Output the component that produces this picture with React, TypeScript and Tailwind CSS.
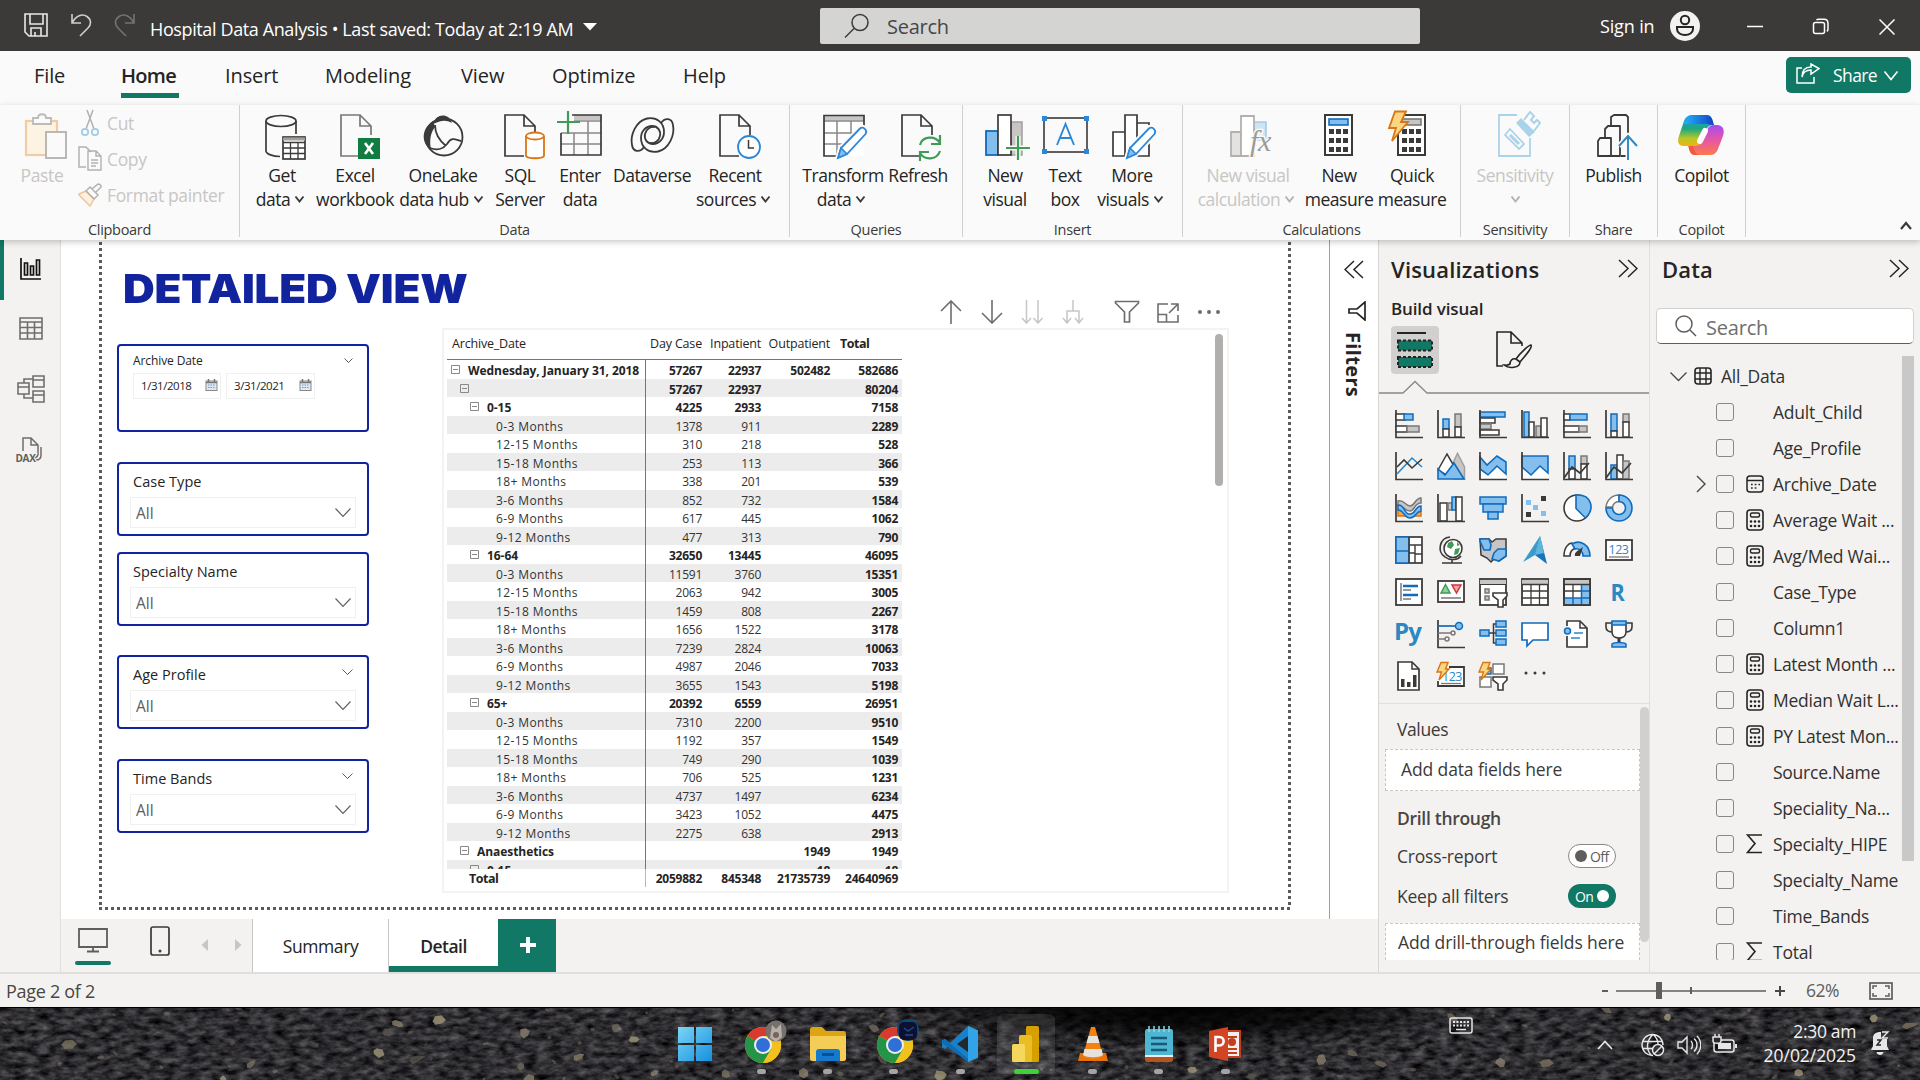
import React from "react";

type Kids = { children?: React.ReactNode };
const DK = "#3b3a39";
const BL = "#0f6cbd";
const LB = "#83beec";
const GR = "#7a7876";
const LG = "#c8c6c4";

function I({ w = 52, h = 52, vb, c = "", children }: Kids & { w?: number; h?: number; vb?: string; c?: string }) {
  return (
    <svg width={w} height={h} viewBox={vb ?? `0 0 ${w} ${h}`} fill="none" className={`block shrink-0 ${c}`}>
      {children}
    </svg>
  );
}

function Chevron({ w, h, c = DK, s = 1.3 }: { w: number; h: number; c?: string; s?: number }) {
  return (
    <svg width={w} height={h} className="block shrink-0 overflow-visible" fill="none">
      <path d={`M0.5 0.5L${w / 2} ${h - 0.5}L${w - 0.5} 0.5`} stroke={c} strokeWidth={s} />
    </svg>
  );
}

/* ---------- Title bar ---------- */
function TitleBar() {
  return (
    <header className="flex h-[51px] shrink-0 items-center bg-[#3b3a39] text-white">
      <div className="flex w-[820px] items-center pl-[24px]">
        <I w={24} h={24} c="-mt-px">
          <path d="M1 1h22v22H5l-4-4z M6 1v10h13V1 M7 23v-8h10v8 M11 23v-4" stroke="#e8e8e8" strokeWidth="1.6" />
        </I>
        <I w={22} h={24} c="ml-[22px] -mt-px">
          <path d="M2 1v9h9 M2 10C6 3 12 0 17 3.500C22 7 21 12 18 15L10 23" stroke="#d0cfce" strokeWidth="1.6" />
        </I>
        <I w={22} h={24} c="ml-[22px] -mt-px">
          <path d="M20 1v9h-9 M20 10C16 3 10 0 5 3.500C0 7 1 12 4 15L12 23" stroke="#75736f" strokeWidth="1.600" />
        </I>
        <span className="mt-[8px] ml-[14px] w-[425px] text-[18px] tracking-[-0.380px] whitespace-pre">Hospital Data Analysis • Last saved: Today at 2:19 AM</span>
        <I w={14} h={8} c="mt-[3px] ml-[8px]">
          <path d="M0 0h14L7 7.500z" fill="#fff" />
        </I>
      </div>
      <div className="flex h-[36px] w-[600px] items-center rounded-[2px] bg-[#d4d4d2] pl-[24px]">
        <I w={26} h={26}>
          <circle cx="16" cy="9.500" r="8" stroke="#3b3a39" strokeWidth="1.500" />
          <path d="M10 15.500L1 24.500" stroke="#3b3a39" strokeWidth="1.500" />
        </I>
        <span className="mt-[3px] ml-[17px] text-[20px] tracking-[-0.250px] text-[#484644]">Search</span>
      </div>
      <div className="flex flex-1 items-center pl-[180px]">
        <span className="w-[55px] pt-px text-[18px] tracking-[-0.150px] whitespace-nowrap">Sign in</span>
        <I w={30} h={30} c="ml-[15px]">
          <circle cx="15" cy="15" r="15" fill="#f3f2f1" />
          <circle cx="15" cy="9" r="4.200" stroke="#252423" strokeWidth="2" />
          <path d="M7 16h16v2c0 8-16 8-16 0z" stroke="#252423" strokeWidth="2" />
        </I>
        <I w={16} h={16} c="ml-[47px]"><path d="M0 8.500h16" stroke="#fff" strokeWidth="1.500" /></I>
        <I w={18} h={18} c="mt-[3px] ml-[49px]">
          <rect x="1.500" y="4.500" width="11" height="11" rx="2" stroke="#fff" strokeWidth="1.500" />
          <path d="M4.500 2C5 1.500 5.500 1.300 6.500 1.300H12C14.500 1.300 16 3 16 5.500V11C16 12 15.500 13 14.800 13.300" stroke="#fff" strokeWidth="1.500" />
        </I>
        <I w={16} h={16} c="mt-[3px] ml-[49px]"><path d="M0.500 0.500l15 15M15.500 0.500l-15 15" stroke="#fff" strokeWidth="1.500" /></I>
      </div>
    </header>
  );
}

/* ---------- Ribbon tabs ---------- */
const TABS: [string, string][] = [
  ["File", "w-[87px]"],
  ["Home", "w-[104px]"],
  ["Insert", "w-[100px]"],
  ["Modeling", "w-[136px]"],
  ["View", "w-[91px]"],
  ["Optimize", "w-[131px]"],
  ["Help", "w-[60px]"],
];
function Tabs() {
  return (
    <nav className="flex h-[54px] shrink-0 bg-[#fafafa] pl-[34px] text-[#252423]">
      {TABS.map(([t, w]) => (
        <div key={t} className={`${w} shrink-0`}>
          <div className="inline-block">
            <div className={`h-[42px] pt-[9px] text-[20px] leading-[32px] ${t === "Home" ? "font-semibold tracking-[-0.700px]" : "tracking-[-0.100px]"}`}>{t}</div>
            {t === "Home" && <div className="h-[5px] w-[58px] bg-[#117865]" />}
          </div>
        </div>
      ))}
      <div className="mt-[6px] mr-[9px] ml-auto flex h-[36px] w-[125px] items-center rounded-[5px] bg-[#117865] pl-[10px] text-white">
        <I w={24} h={22} c="-mt-[2px]">
          <path d="M6 5H1V20H18V14 M6 14C7 9 10 7 15 7V11L23 5.500L15 1V4C9 4 6 8 6 14z" stroke="#fff" strokeWidth="1.500" />
        </I>
        <span className="mr-[7px] ml-[13px] text-[17.500px] tracking-[-0.600px]">Share</span>
        <Chevron w={14} h={9} c="#fff" s={1.600} />
      </div>
    </nav>
  );
}

/* ---------- Ribbon icons ---------- */
const Doc = ({ x = 10, c = DK }: { x?: number; c?: string }) => (
  <path transform={`translate(${x} 4)`} d="M20 42H1V1H20L31 12V21 M20 1V12H31" stroke={c} strokeWidth="1.700" fill="none" />
);
const Pencil = () => (
  <>
    <path d="M20 49L23 38L43 17Q49 16 51 23L30 45z" fill="#fafafa" stroke="#fafafa" strokeWidth="4" />
    <path d="M21 48L24 38L43 18.500C46 16 51 20 48.500 24L30 44z" fill="#fff" stroke="#2b88d8" strokeWidth="1.800" />
    <path d="M21 48L24 38L30 44z" fill={LB} stroke="#2b88d8" strokeWidth="1.500" />
  </>
);
const Calc = ({ grey }: { grey?: boolean }) => (
  <>
    <rect x="12" y="5" width="27" height="40" fill="#fff" stroke={DK} strokeWidth="2" />
    <rect x="16" y="9" width="19" height="6" fill={grey ? LG : LB} stroke={grey ? GR : BL} strokeWidth="1.600" />
    {[19, 28, 37].map((y) => [16, 23, 30].map((x) => <rect key={`${x}-${y}`} x={x} y={y} width="5" height="5" fill={DK} />))}
  </>
);
const Bolt = () => <path d="M9 1.500H20L15 12H22L6 31L10 18H3z" fill="#fcd581" stroke="#d87616" strokeWidth="1.800" />;
const SWIRL = "M18 37C14 43 7 42 6 35C4 25 10 11 21 8.500C31 6.500 38 13 38 22C38 29 33 34 27 34C21 34 18 29 19 24C20 19 25 16 29 17";

const RIB: Record<string, React.ReactNode> = {
  paste: (
    <I>
      <rect x="10" y="11" width="31" height="34" fill="#fdf3e3" stroke="#f0cba4" strokeWidth="2.200" />
      <path d="M17 14V8H22C22 3 30 3 30 8H35V14z" fill="#fafafa" stroke="#bdbbb9" strokeWidth="1.800" />
      <rect x="30" y="22" width="20" height="26" fill="#fafafa" stroke="#b3b1af" strokeWidth="1.800" />
    </I>
  ),
  get: (
    <I>
      <path d="M10 11V41C10 44 17 46.500 24 46.500M40 11V24" stroke={DK} strokeWidth="1.700" />
      <ellipse cx="25" cy="11" rx="15" ry="5.500" stroke={DK} strokeWidth="1.700" />
      <rect x="27" y="27" width="22" height="22" fill="#fff" stroke={DK} strokeWidth="1.700" />
      <path d="M27 29H49" stroke="#a19f9d" strokeWidth="3" />
      <path d="M27 32.500H49M27 38H49M27 43.500H49M34.500 32V49M42 32V49" stroke={DK} strokeWidth="1.300" />
    </I>
  ),
  excel: (
    <I>
      <Doc x={11} c="#797775" />
      <rect x="29" y="28" width="22" height="21" fill="#107c41" />
      <path d="M36 33L44 44M44 33L36 44" stroke="#fff" strokeWidth="2.600" />
    </I>
  ),
  onelake: (
    <I>
      <circle cx="27" cy="27" r="18.500" stroke={DK} strokeWidth="1.800" />
      <path d="M16 14C19 3 32 3 35 13C28 9 23 11 16 14z" fill={DK} />
      <path d="M16 11C2 20 6 36 14 39C12 30 14 22 18 17z" fill={DK} />
      <path d="M18 15C18 25 23 31 29 36M13 38C21 41 27 38 30 34C35 26 39 30 44 31" stroke={DK} strokeWidth="1.800" />
    </I>
  ),
  sql: (
    <I>
      <Doc x={10} />
      <path d="M32 26V46C34 49 48 49 50 46V26" fill="#fff" stroke="#d87616" strokeWidth="1.800" />
      <ellipse cx="41" cy="26" rx="9" ry="3.500" fill="#fff" stroke="#d87616" strokeWidth="1.800" />
    </I>
  ),
  enter: (
    <I>
      <path d="M20 7.500H48" stroke={LG} strokeWidth="5" />
      <path d="M20 11H47M7 23H47M7 34H47M20 23V45M34 11V45" stroke="#8a8886" strokeWidth="1.500" />
      <path d="M18 5H47V45H7V23" stroke={DK} strokeWidth="1.700" />
      <path d="M3 12H26M14 1V24" stroke="#3f9b56" strokeWidth="2.200" />
    </I>
  ),
  dataverse: (
    <I>
      <path d={SWIRL} stroke={DK} strokeWidth="1.800" />
      <path d={SWIRL} transform="rotate(180 26.500 25)" stroke={DK} strokeWidth="1.800" />
    </I>
  ),
  recent: (
    <I>
      <Doc x={10} />
      <circle cx="40" cy="37" r="11" fill="#fff" stroke="#2b88d8" strokeWidth="1.800" />
      <path d="M39.500 30V38H45" stroke={DK} strokeWidth="1.500" />
    </I>
  ),
  transform: (
    <I>
      <rect x="7" y="6" width="40" height="40" fill="#fff" />
      <path d="M7 8H47" stroke={LG} strokeWidth="5" />
      <path d="M7 11H47M7 23H47M7 34H40M20 11V46M34 11V40" stroke="#8a8886" strokeWidth="1.500" />
      <path d="M24 46H7V5.500H47V25" stroke={DK} strokeWidth="1.700" />
      <Pencil />
    </I>
  ),
  refresh: (
    <I>
      <Doc x={9} />
      <circle cx="38" cy="38" r="13" fill="#fafafa" />
      <path d="M28 35C30 26 43 25 48 33M48 25V34H39M48 41C45 50 33 51 28 43M28 51V42H37" stroke="#3f9b56" strokeWidth="2.200" />
    </I>
  ),
  newvisual: (
    <I>
      <rect x="32" y="12" width="11" height="33" fill={LG} stroke="#a19f9d" strokeWidth="1.500" />
      <rect x="7" y="21" width="12" height="24" fill={LB} stroke={BL} strokeWidth="1.800" />
      <rect x="19" y="5" width="13" height="40" fill="#fff" stroke={DK} strokeWidth="1.700" />
      <path d="M27 38H51M39 26V50" stroke="#fafafa" strokeWidth="5" />
      <path d="M27 38H51M39 26V50" stroke="#3f9b56" strokeWidth="2.200" />
    </I>
  ),
  textbox: (
    <I>
      <rect x="5" y="8" width="43" height="34" stroke={DK} strokeWidth="1.600" />
      {[[3, 6], [45, 6], [3, 39], [45, 39]].map(([x, y]) => <rect key={`${x}${y}`} x={x} y={y} width="5" height="5" fill="#2b88d8" />)}
      <path d="M18 35L26.500 14L35 35M21 28H32" stroke="#2b88d8" strokeWidth="1.900" />
    </I>
  ),
  more: (
    <I>
      <path d="M7 22H19V46H7zM19 5H31V46H19zM31 13H43V46H31z" fill="#fff" stroke={DK} strokeWidth="1.700" />
      <Pencil />
    </I>
  ),
  calcvisual: (
    <I>
      <path d="M9 22H19V46H9z" fill="#e3e2e1" stroke="#b3b1af" strokeWidth="1.800" />
      <path d="M32 12H44V30H32z" fill="#cde4f5" stroke="#a5cbe6" strokeWidth="1.600" />
      <path d="M19 6H32V46H19z" fill="#fff" stroke="#b3b1af" strokeWidth="1.800" />
      <text x="28" y="41" className="font-['Liberation_Serif'] text-[30px] italic" fill="#9c9a98" stroke="#fafafa" strokeWidth="3" paintOrder="stroke">fx</text>
    </I>
  ),
  measure: <I><Calc /></I>,
  quick: <I><Calc grey /><Bolt /></I>,
  sensitivity: (
    <I>
      <path d="M28 5H10V46H41V28" stroke="#a9d3ea" strokeWidth="1.800" />
      <path d="M16 25L21 19L35 34L30 39z" stroke="#a9d3ea" strokeWidth="1.800" />
      <path d="M21 25L30 34" stroke="#a9d3ea" strokeWidth="3" />
      <path d="M32 8L46 22L40 27L27 13z" fill="#a9d3ea" />
      <path d="M35 10L41 2L45 6L42 10L45 13L48 10L51 13L45 21" stroke="#a9d3ea" strokeWidth="2" />
    </I>
  ),
  publish: (
    <I>
      <path d="M10 46V31L12 28H23V46zM17 28V19L20 16H32V46H23M23 16V7L26 5H38L40 7V26M33 46H38" stroke={DK} strokeWidth="1.800" strokeLinejoin="round" />
      <path d="M40 50V26M31 36L40 26L49 36" stroke="#fafafa" strokeWidth="5" />
      <path d="M40 50V26M31 36L40 26L49 36" stroke="#2b88c0" strokeWidth="1.900" />
    </I>
  ),
  copilot: (
    <I c="mr-[2px]">
      <defs>
        <linearGradient id="cpA" x1="0" y1="0" x2="0" y2="1">
          <stop offset="0.100" stopColor="#1a9be8" /><stop offset="0.450" stopColor="#1fa87c" /><stop offset="0.750" stopColor="#b8c62a" /><stop offset="1" stopColor="#f0b410" />
        </linearGradient>
        <linearGradient id="cpB" x1="0" y1="0" x2="0" y2="1">
          <stop offset="0" stopColor="#a54ef0" /><stop offset="0.500" stopColor="#e855a5" /><stop offset="1" stopColor="#fb7b4b" />
        </linearGradient>
        <linearGradient id="cpC" x1="0" y1="0" x2="1" y2="0">
          <stop offset="0" stopColor="#22b3f5" /><stop offset="1" stopColor="#1340c8" />
        </linearGradient>
      </defs>
      <path d="M20 45C14 45 14 36 13 34H25L32 20C34 16 36 15 39 15H42C48 15 50 20 48 26L43 39C41 44 38 45 34 45z" fill="url(#cpB)" />
      <path d="M13 34L18 36C20 44 22 45 26 45H20C15 45 14 40 13 34z" fill="#ee5a3c" />
      <path d="M32 5C38 5 38 14 39 15C35 15 33 16 31 20L26 33C25 35 23 36 20 36H9C3 36 2 31 4 26L9 11C11 6 14 5 18 5z" fill="url(#cpA)" />
      <path d="M18 5H32C38 5 38 14 39 15C34 15 32 13 29 14H9C11 7 14 5 18 5z" fill="url(#cpC)" />
      <path d="M30 21L25 31" stroke="#fff" strokeWidth="6" strokeLinecap="round" />
    </I>
  ),
};

type Item = { i: string; w: string; a: string; b?: string; ch?: boolean; dis?: boolean };
const GROUPS: { label: string; w: string; items: Item[] }[] = [
  {
    label: "Data", w: "w-[550px]",
    items: [
      { i: "get", w: "w-[72px] ml-[6px]", a: "Get", b: "data", ch: true },
      { i: "excel", w: "w-[74px]", a: "Excel", b: "workbook" },
      { i: "onelake", w: "w-[102px]", a: "OneLake", b: "data hub", ch: true },
      { i: "sql", w: "w-[52px]", a: "SQL", b: "Server" },
      { i: "enter", w: "w-[68px]", a: "Enter", b: "data" },
      { i: "dataverse", w: "w-[76px]", a: "Dataverse" },
      { i: "recent", w: "w-[90px]", a: "Recent", b: "sources", ch: true },
    ],
  },
  {
    label: "Queries", w: "w-[173px]",
    items: [
      { i: "transform", w: "w-[80px] ml-[13px]", a: "Transform", b: "data", ch: true },
      { i: "refresh", w: "w-[70px]", a: "Refresh" },
    ],
  },
  {
    label: "Insert", w: "w-[220px]",
    items: [
      { i: "newvisual", w: "w-[60px] ml-[12px]", a: "New", b: "visual" },
      { i: "textbox", w: "w-[60px]", a: "Text", b: "box" },
      { i: "more", w: "w-[74px]", a: "More", b: "visuals", ch: true },
    ],
  },
  {
    label: "Calculations", w: "w-[278px]",
    items: [
      { i: "calcvisual", w: "w-[108px] ml-[11px]", a: "New visual", b: "calculation", ch: true, dis: true },
      { i: "measure", w: "w-[74px]", a: "New", b: "measure" },
      { i: "quick", w: "w-[72px]", a: "Quick", b: "measure" },
    ],
  },
  { label: "Sensitivity", w: "w-[109px]", items: [{ i: "sensitivity", w: "w-[108px]", a: "Sensitivity", b: "", ch: true, dis: true }] },
  { label: "Share", w: "w-[88px]", items: [{ i: "publish", w: "w-[87px]", a: "Publish" }] },
  { label: "Copilot", w: "w-[88px]", items: [{ i: "copilot", w: "w-[87px]", a: "Copilot" }] },
];

function RibbonItem({ it }: { it: Item }) {
  return (
    <div className={`${it.w} flex shrink-0 flex-col items-center text-[17.500px] leading-[24px] tracking-[-0.450px] whitespace-nowrap ${it.dis ? "text-[#c8c6c4]" : "text-[#252423]"}`}>
      <div className="h-[58px] pt-[5px]">{RIB[it.i]}</div>
      <div>{it.a}</div>
      {(it.b || it.ch) && (
        <div className={`flex h-[24px] items-center gap-[5px] ${it.b && it.ch ? "mr-[4px]" : ""}`}>
          {it.b && <span>{it.b}</span>}
          {it.ch && <Chevron w={9} h={6} c={it.dis ? "#b3b1af" : DK} s={1.900} />}
        </div>
      )}
    </div>
  );
}

const GroupLabel = ({ children }: Kids) => (
  <div className="shrink-0 pt-[3px] text-center text-[14.500px] leading-[22px] tracking-[-0.300px] text-[#3b3a39]">{children}</div>
);

function Ribbon() {
  return (
    <div className="relative z-10 flex h-[135px] shrink-0 bg-[#fafafa] pb-[3px] shadow-[0_2px_6px_rgba(0,0,0,0.220)]">
      <div className="flex w-[240px] flex-col border-r border-[#d2d0ce] text-[17.500px] tracking-[-0.350px] text-[#c8c6c4]">
        <div className="flex h-[111px] shrink-0">
          <div className="ml-[15px] flex w-[54px] flex-col items-center leading-[24px]">
            <div className="h-[58px] pt-[5px]">{RIB.paste}</div>
            <div>Paste</div>
          </div>
          <div className="ml-[9px] flex flex-col">
            <div className="flex h-[36px] shrink-0 items-center">
              <I w={24} h={28} c="mr-[5px]">
                <path d="M9 1L16 20M15 1L8 20" stroke="#b3b1af" strokeWidth="1.500" />
                <circle cx="7" cy="23" r="3.200" stroke="#9fcbe6" strokeWidth="1.700" /><circle cx="17" cy="23" r="3.200" stroke="#9fcbe6" strokeWidth="1.700" />
              </I>Cut
            </div>
            <div className="flex h-[36px] shrink-0 items-center">
              <I w={24} h={26} c="mr-[5px]">
                <path d="M8 21H1V1H8L13 6" stroke="#b3b1af" strokeWidth="1.500" />
                <path d="M10 5H18L23 10V24H10zM18 5V10H23M13 14H20M13 17H20M13 20H18" stroke="#b3b1af" strokeWidth="1.400" />
              </I>Copy
            </div>
            <div className="flex h-[36px] shrink-0 items-center whitespace-nowrap">
              <I w={24} h={24} c="mr-[5px]">
                <path d="M1 11L8 8L16 16L12 23L1 12z" fill="#fdf0dc" stroke="#f0c49a" strokeWidth="1.500" />
                <path d="M8 8L12 4L20 12L16 16zM14 6L20 1C23 1 24 4 22 5L17 10" stroke="#b3b1af" strokeWidth="1.500" />
              </I>Format painter
            </div>
          </div>
        </div>
        <GroupLabel>Clipboard</GroupLabel>
      </div>
      {GROUPS.map((g) => (
        <div key={g.label} className={`${g.w} flex shrink-0 flex-col border-r border-[#d2d0ce]`}>
          <div className="flex h-[111px] shrink-0">{g.items.map((it) => <RibbonItem key={it.i} it={it} />)}</div>
          <GroupLabel>{g.label}</GroupLabel>
        </div>
      ))}
      <div className="mr-[8px] mb-[7px] ml-auto flex items-end">
        <I w={12} h={9}><path d="M1 8L6 2L11 8" stroke={DK} strokeWidth="2.200" /></I>
      </div>
    </div>
  );
}

/* ---------- Left rail ---------- */
function Rail() {
  return (
    <aside className="flex w-[61px] shrink-0 flex-col border-r border-[#e1dfdd] bg-[#f3f2f1]">
      <div className="flex h-[60px] items-center border-l-4 border-[#117865] pl-[16px]">
        <I w={22} h={22} c="-mt-[2px]"><path d="M1 0V21H21M4.500 5H7.500V17H4.500zM10.500 8H13.500V17H10.500zM16.500 2H19.500V17H16.500z" stroke="#111" strokeWidth="1.700" /></I>
      </div>
      <div className="flex h-[57px] items-center pl-[19px]">
        <I w={24} h={23}><path d="M1 1H23V22H1zM1 5H23M1 10.500H23M1 16H23M8.500 5V22M15.500 5V22" stroke="#706e6c" strokeWidth="1.600" /></I>
      </div>
      <div className="flex h-[64px] items-center pl-[17px]">
        <I w={28} h={28}><path d="M1 8H12V19H1zM1 12H12M16 1H27V12H16zM16 5H27M16 16H27V27H16zM16 20H27M7 8V4H16M7 19V23H16" stroke="#706e6c" strokeWidth="1.600" /></I>
      </div>
      <div className="flex h-[58px] items-center pl-[16px]">
        <I w={27} h={26} c="overflow-visible">
          <path d="M7 14V1H15L22 8V17C22 19 21 20 19 21M15 1V8H22M25 10V18C25 21 23 23 20 23" stroke="#706e6c" strokeWidth="1.500" />
          <text x="-0.500" y="24.500" className="text-[10px] font-bold tracking-[-0.300px]" fill="#605e5c" stroke="#f3f2f1" strokeWidth="2" paintOrder="stroke">DAX</text>
        </I>
      </div>
    </aside>
  );
}

/* ---------- Canvas ---------- */
function Slicer({ title, top, arrow }: { title: string; top: string; arrow?: boolean }) {
  return (
    <div className={`${top} h-[74px] rounded-[4px] border-2 border-[#12239e] bg-white px-[11px]`}>
      <div className="flex h-[33px] items-center justify-between pt-[3px] pr-[3px] pl-[3px]">
        <span className="text-[14.500px] tracking-[0.020px] text-[#252423]">{title}</span>
        {arrow && <span className="-mt-[6px]"><Chevron w={11} h={6} c="#605e5c" s={1} /></span>}
      </div>
      <div className="flex h-[31px] items-center justify-between border border-[#f0f0f0] pr-[4px] pl-[5px]">
        <span className="pt-[2px] text-[15.500px] font-medium text-[#605e5c]">All</span>
        <Chevron w={16} h={9} c="#605e5c" s={1.100} />
      </div>
    </div>
  );
}

function DateBox({ v, w }: { v: string; w: string }) {
  return (
    <div className={`${w} flex h-[26px] items-center justify-between border border-[#f0f0f0] pr-[2px] pl-[7px]`}>
      <span className="text-[11.500px] tracking-[-0.450px] text-[#252423]">{v}</span>
      <I w={13} h={12} c="-mt-[3px]">
        <rect x="1" y="2" width="11" height="9.500" fill="#dce9f5" stroke="#8a8886" />
        <path d="M1 3.500H12M3.500 0V3M9.500 0V3" stroke="#797775" strokeWidth="1.500" />
        <path d="M3 6H10M3 8.500H10" stroke="#7896b8" strokeDasharray="1.500 1" />
      </I>
    </div>
  );
}

type Row = [number, string, string, string, string, string];
const ROWS: Row[] = [
  [0, "Wednesday, January 31, 2018", "57267", "22937", "502482", "582686"],
  [1, "", "57267", "22937", "", "80204"],
  [2, "0-15", "4225", "2933", "", "7158"],
  [3, "0-3 Months", "1378", "911", "", "2289"],
  [3, "12-15 Months", "310", "218", "", "528"],
  [3, "15-18 Months", "253", "113", "", "366"],
  [3, "18+ Months", "338", "201", "", "539"],
  [3, "3-6 Months", "852", "732", "", "1584"],
  [3, "6-9 Months", "617", "445", "", "1062"],
  [3, "9-12 Months", "477", "313", "", "790"],
  [2, "16-64", "32650", "13445", "", "46095"],
  [3, "0-3 Months", "11591", "3760", "", "15351"],
  [3, "12-15 Months", "2063", "942", "", "3005"],
  [3, "15-18 Months", "1459", "808", "", "2267"],
  [3, "18+ Months", "1656", "1522", "", "3178"],
  [3, "3-6 Months", "7239", "2824", "", "10063"],
  [3, "6-9 Months", "4987", "2046", "", "7033"],
  [3, "9-12 Months", "3655", "1543", "", "5198"],
  [2, "65+", "20392", "6559", "", "26951"],
  [3, "0-3 Months", "7310", "2200", "", "9510"],
  [3, "12-15 Months", "1192", "357", "", "1549"],
  [3, "15-18 Months", "749", "290", "", "1039"],
  [3, "18+ Months", "706", "525", "", "1231"],
  [3, "3-6 Months", "4737", "1497", "", "6234"],
  [3, "6-9 Months", "3423", "1052", "", "4475"],
  [3, "9-12 Months", "2275", "638", "", "2913"],
  [1, "Anaesthetics", "", "", "1949", "1949"],
  [2, "0-15", "", "", "18", "18"],
];
const INDENT = ["pl-[4px]", "pl-[13px]", "pl-[23px]", "pl-[49px]"];

function Matrix() {
  return (
    <div className="flex h-[565px] w-[787px] justify-between border-2 border-[#f3f3f3] bg-white text-[12px] tracking-[-0.250px] text-[#333]">
      <div className="ml-[3px] flex w-[455px] flex-col">
        <div className="flex h-[30px] items-center border-b border-[#118dff] text-[12.500px] tracking-[-0.180px] text-[#252423]">
          <div className="w-[199px] pl-[5px]">Archive_Date</div>
          <div className="w-[56px] text-right">Day Case</div>
          <div className="w-[59px] text-right">Inpatient</div>
          <div className="w-[69px] text-right">Outpatient</div>
          <div className="pl-[10px] font-bold tracking-[-0.500px]">Total</div>
        </div>
        <div className="h-[509px] overflow-hidden">
          {ROWS.map(([lv, name, a, b, c, d], n) => (
            <div key={n} className={`flex h-[18.530px] leading-[22px] ${n % 2 ? "bg-[#ececec]" : "bg-white"} ${lv < 3 ? "font-bold text-[#252423]" : ""}`}>
              <div className={`${INDENT[lv]} flex h-full w-[199px] border-r border-[#118dff] whitespace-nowrap ${lv < 3 ? "tracking-[-0.060px]" : "tracking-[0.400px]"}`}>
                {lv < 3 && (
                  <I w={9} h={9} c="mt-[5px] mr-[8px]"><path d="M0.500 0.500H8.500V8.500H0.500zM2 4.500H7" stroke="#8a8886" /></I>
                )}
                {name}
              </div>
              <div className="w-[56px] text-right">{a}</div>
              <div className="w-[59px] text-right">{b}</div>
              <div className="w-[69px] text-right">{c}</div>
              <div className="w-[68px] text-right font-bold text-[#252423]">{d}</div>
            </div>
          ))}
        </div>
        <div className="flex h-[18px] items-center leading-[20px] font-bold text-[#252423]">
          <div className="flex h-full w-[199px] items-center border-r border-[#8cc4f7] pt-px pl-[22px] text-[12.500px] tracking-[-0.500px]">Total</div>
          <div className="w-[56px] pt-[2px] text-right">2059882</div>
          <div className="w-[59px] pt-[2px] text-right">845348</div>
          <div className="w-[69px] pt-[2px] text-right">21735739</div>
          <div className="w-[68px] pt-[2px] text-right">24640969</div>
        </div>
      </div>
      <div className="mt-[4px] mr-[4px] h-[152px] w-[8px] rounded-full bg-[#b1afae]" />
    </div>
  );
}

function VisualToolbar() {
  const c = "#706e6c";
  const l = "#c8c6c4";
  return (
    <div className="flex h-[24px] items-center">
      <I w={22} h={24}><path d="M11 24V1M1 11L11 1L21 11" stroke={c} strokeWidth="1.600" /></I>
      <I w={22} h={24} c="ml-[19px]"><path d="M11 0V23M1 13L11 23L21 13" stroke={c} strokeWidth="1.600" /></I>
      <I w={22} h={24} c="ml-[18px]"><path d="M5.500 0V22M1 18L5.500 23L10 18M17 0V22M12.500 18L17 23L21.500 18" stroke={l} strokeWidth="1.500" /></I>
      <I w={22} h={24} c="ml-[19px]"><path d="M11 0V11M5 22V11H17V22M1 18L5 23L9 18M13 18L17 23L21 18" stroke={l} strokeWidth="1.500" /></I>
      <I w={26} h={24} c="ml-[30px]"><path d="M1.500 1.500H24.500V3L15.500 12V22H10.500V12L1.500 3z" stroke={c} strokeWidth="1.700" /></I>
      <I w={22} h={20} c="mt-[2px] ml-[17px]"><path d="M11 1H1V19H21V12M1 11.500H9.500V19M12 10L21 1M14 1H21V8" stroke={c} strokeWidth="1.600" /></I>
      <I w={24} h={6} c="ml-[18px]"><circle cx="3" cy="3" r="2" fill={c} /><circle cx="12" cy="3" r="2" fill={c} /><circle cx="21" cy="3" r="2" fill={c} /></I>
    </div>
  );
}

const VDOT = "w-[3px] shrink-0 bg-[repeating-linear-gradient(to_bottom,transparent_0_2px,#5c5a58_2px_5px,transparent_5px_6px)]";

function Canvas() {
  return (
    <main className="flex h-[679px] bg-white pl-[38px]">
      <div className="flex h-[670px] w-[1192px] flex-col">
        <div className="flex h-[667px]">
          <div className={VDOT} />
          <div className="w-[1186px]">
            <div className="h-[60px] pt-[26px] pl-[21px]">
              <h1 className="w-[345px] origin-left scale-x-[1.100] font-[Inter] text-[40px] leading-[46px] font-black tracking-[-0.200px] whitespace-nowrap text-[#12239e]">DETAILED VIEW</h1>
            </div>
            <div className="pl-[838px]"><VisualToolbar /></div>
            <div className="flex">
              <div className="flex w-[267px] flex-col pt-[20px] pl-[15px]">
                <div className="h-[88px] rounded-[4px] border-2 border-[#12239e] bg-white px-[14px]">
                  <div className="flex h-[27px] items-center justify-between pt-[2px]">
                    <span className="text-[12px] tracking-[-0.100px] text-[#252423]">Archive Date</span>
                    <Chevron w={9} h={5} c="#605e5c" s={1} />
                  </div>
                  <div className="flex gap-[5px]"><DateBox v="1/31/2018" w="w-[88px]" /><DateBox v="3/31/2021" w="w-[89px]" /></div>
                </div>
                <Slicer title="Case Type" top="mt-[30px]" />
                <Slicer title="Specialty Name" top="mt-[16px]" />
                <Slicer title="Age Profile" top="mt-[29px]" arrow />
                <Slicer title="Time Bands" top="mt-[30px]" arrow />
              </div>
              <div className="pt-[4px] pl-[73px]"><Matrix /></div>
            </div>
          </div>
          <div className={VDOT} />
        </div>
        <div className="h-[3px] bg-[repeating-linear-gradient(to_right,#5c5a58_0_3px,transparent_3px_6px)]" />
      </div>
      <div className="ml-auto flex w-[49px] flex-col items-center border-l border-[#a19f9d] pt-[20px]">
        <I w={20} h={19}><path d="M10 1L1 9.500L10 18M19 1L10 9.500L19 18" stroke="#252423" strokeWidth="1.500" /></I>
        <I w={18} h={20} c="mt-[22px] ml-[6px]"><path d="M17 1V19L9 12H1V8H9z" stroke="#252423" strokeWidth="1.700" /></I>
        <div className="mt-[11px] mr-[2px] text-[20px] leading-[24px] font-bold tracking-[0.350px] text-[#252423] [writing-mode:vertical-rl]">Filters</div>
      </div>
    </main>
  );
}

function PageTabs() {
  return (
    <div className="flex h-[53px] bg-[#f3f2f1]">
      <div className="flex w-[192px] border-r border-[#c8c6c4]">
        <div className="ml-[14px] w-[36px]">
          <I w={36} h={42}><path d="M4 10H32V28H4zM18 28V32M12 32.500H24" stroke="#605e5c" strokeWidth="1.800" /></I>
          <div className="h-[4px] rounded-full bg-[#117865]" />
        </div>
        <I w={20} h={30} c="mt-[7px] ml-[39px]"><rect x="1" y="1" width="18" height="28" rx="2" stroke="#3b3a39" strokeWidth="1.700" /><circle cx="10" cy="25" r="1.500" fill="#3b3a39" /></I>
        <I w={8} h={12} c="mt-[20px] ml-[31px]"><path d="M7 0V12L0.500 6z" fill="#c8c6c4" /></I>
        <I w={8} h={12} c="mt-[20px] ml-[25px]"><path d="M1 0V12L7.500 6z" fill="#c8c6c4" /></I>
      </div>
      <div className="w-[136px] border-r border-[#c8c6c4] bg-white text-center text-[17.500px] leading-[54px] tracking-[-0.400px] text-[#252423]">Summary</div>
      <div className="w-[109px] border-b-[6px] border-[#117865] bg-white text-center text-[17.500px] leading-[54px] font-semibold tracking-[-0.500px] text-[#252423]">Detail</div>
      <div className="flex w-[58px] items-center justify-center bg-[#117865]">
        <I w={18} h={18} c="-mt-[2px] ml-px"><path d="M9 1V17M1 9H17" stroke="#fff" strokeWidth="4" /></I>
      </div>
    </div>
  );
}

/* ---------- Visualizations pane ---------- */
const Ax = () => <path d="M1 0V27.500H28" stroke={DK} strokeWidth="1.700" />;
const R = ({ x, y, w, h, f = "#fff", s = DK, sw = 1.500 }: { x: number; y: number; w: number; h: number; f?: string; s?: string; sw?: number }) => (
  <rect x={x} y={y} width={w} height={h} fill={f} stroke={s} strokeWidth={sw} />
);
const T123 = ({ x, y }: { x: number; y: number }) => <text x={x} y={y} className="text-[12.500px] tracking-[-0.500px]" fill="#2b88c8">123</text>;
const SmallBolt = () => <path d="M4 0.500H11L8.500 7H12L2 18L4.500 10H0z" fill="#fcd581" stroke="#d87616" strokeWidth="1.400" />;

const VIZ: React.ReactNode[] = [
  <><Ax /><R x={1} y={4} w={9} h={6} /><R x={9} y={4} w={9} h={6} f={LB} s={BL} /><R x={1} y={16} w={11} h={6} /><R x={12} y={16} w={12} h={6} f={LG} s={GR} /></>,
  <><Ax /><R x={6} y={9} w={6} h={10} f={LB} s={BL} /><R x={6} y={19} w={6} h={8} /><R x={18} y={4} w={6} h={13} f={LG} s={GR} /><R x={18} y={17} w={6} h={10} /></>,
  <><R x={1} y={2} w={25} h={5} f={LB} s={BL} /><R x={1} y={8} w={15} h={5} /><R x={1} y={14} w={11} h={5} f={LG} s={GR} /><R x={1} y={20} w={19} h={5} /><Ax /></>,
  <><R x={3} y={2} w={5} h={25} f={LB} s={BL} /><R x={8} y={12} w={5} h={15} /><R x={15} y={16} w={5} h={11} f={LG} s={GR} /><R x={20} y={8} w={6} h={19} /><Ax /></>,
  <><Ax /><R x={1} y={4} w={6} h={6} /><R x={7} y={4} w={17} h={6} f={LB} s={BL} /><R x={1} y={16} w={15} h={6} /><R x={16} y={16} w={8} h={6} f={LG} s={GR} /></>,
  <><Ax /><R x={6} y={4} w={6} h={17} f={LB} s={BL} /><R x={6} y={21} w={6} h={6} /><R x={18} y={4} w={6} h={8} f={LG} s={GR} /><R x={18} y={12} w={6} h={15} /></>,
  <><Ax /><path d="M2 22L17 6L27 15" stroke="#2b88c8" strokeWidth="1.600" /><path d="M2 15L9 8L17 16L27 7" stroke={DK} strokeWidth="1.600" /></>,
  <><path d="M13 17L20.500 1.500L27.500 15V27H17z" fill={LG} stroke="#a19f9d" strokeWidth="1.500" /><path d="M1 18L10 2L17 14L11 24z" fill="#fff" stroke={DK} strokeWidth="1.500" /><path d="M1 17L8 23L17 11L27 27H1z" fill={LB} stroke={BL} strokeWidth="1.600" /></>,
  <><path d="M1 5L8 13L18 4L27 10V22L18 14L9 23L1 17z" fill={LB} stroke={BL} strokeWidth="1.600" /><path d="M2 19L9 24L18 16L27 24V27H2z" fill="#fff" /><Ax /></>,
  <><R x={1} y={4} w={26} h={23} f="#fff" s="#fff" /><path d="M1 4H27V21L19 14L10 23L1 15z" fill={LB} stroke={BL} strokeWidth="1.600" /><Ax /></>,
  <><R x={6} y={4} w={6} h={13} f={LB} s={BL} /><R x={6} y={17} w={6} h={10} /><R x={18} y={4} w={6} h={8} f={LG} s={GR} /><R x={18} y={12} w={6} h={15} /><Ax /><path d="M1 26L9 15L17 21L26 11" stroke={DK} strokeWidth="1.700" /></>,
  <><R x={6} y={13} w={6} h={14} f={LB} s={BL} /><R x={12} y={3} w={6} h={24} /><R x={18} y={9} w={6} h={18} f={LG} s={GR} /><Ax /><path d="M1 26L9 15L17 21L26 11" stroke={DK} strokeWidth="1.700" /></>,
  <><path d="M3 15C9 12 10 22 15 22C20 22 20 18 26 18V22H3z" fill="#f6a64c" stroke="#d87616" strokeWidth="1.500" /><path d="M3 7C9 5 10 12 15 12C20 12 20 4 26 4V9C19 9 20 17 15 17C9 17 9 11 3 12z" fill={LG} stroke={GR} strokeWidth="1.500" /><path d="M3 11C10 10 9 21 15 20C21 20 20 12 26 12V17C21 17 21 24 15 24C9 24 9 16 3 16z" fill={LB} stroke={BL} strokeWidth="1.500" /><Ax /></>,
  <><R x={3} y={9} w={7} h={18} /><R x={11} y={9} w={4} h={7} f={LG} s={GR} /><R x={15} y={3} w={4} h={13} f={LB} s={BL} /><R x={19} y={3} w={6} h={24} /><Ax /></>,
  <><R x={1} y={3} w={26} h={7} f={LB} s={BL} /><R x={4} y={10} w={20} h={8} f={LB} s={BL} /><R x={9} y={18} w={10} h={7} f={LB} s={BL} /></>,
  <><Ax /><rect x="5" y="6" width="5" height="5" fill={LB} /><rect x="12" y="11" width="5" height="5" fill={LB} /><rect x="20" y="17" width="5" height="5" fill={LB} /><rect x="20" y="2" width="5" height="5" fill={DK} /><rect x="5" y="18" width="5" height="5" fill={DK} /></>,
  <><circle cx="14" cy="14" r="13" fill="#fff" stroke={DK} strokeWidth="1.600" /><path d="M13 1C29 0 32 15 22.500 24L13 14.500z" fill={LB} stroke={BL} strokeWidth="1.600" /></>,
  <><circle cx="14" cy="14" r="10" stroke="#fff" strokeWidth="6" /><path d="M1 13A13 13 0 0 1 14 1V7.500A7 7 0 0 0 7.500 13z" stroke={GR} strokeWidth="1.500" /><path d="M14 1A13 13 0 1 1 1 14H7.500A6.500 6.500 0 1 0 14 7.500z" fill={LB} stroke={BL} strokeWidth="1.600" /></>,
  <><R x={1} y={1} w={26} h={26} sw={1.700} /><path d="M14 1H1V27H14zM1 15H14" fill={LB} stroke={BL} strokeWidth="1.600" /><path d="M14 1V27M14 9H27M20 9V27M14 17H20M20 18H27" stroke={DK} strokeWidth="1.400" /></>,
  <><circle cx="16" cy="12.500" r="9" fill="#fff" stroke={DK} strokeWidth="1.600" /><path d="M11 7L15 5L17 9L14 13L10 11zM18 13L23 12L21 18L17 19zM20 6L23 9L20 10z" fill="#3f9b56" /><path d="M13 1C2 2 0 16 8 21C13 25 21 24 24 20M15 23V26.500M5 27H25" stroke={DK} strokeWidth="1.600" /></>,
  <><path d="M1 3H10L13 6L17 3H27V20L20 25L15 23L12 26L8 22L2 19z" fill={LG} stroke={DK} strokeWidth="1.500" /><path d="M1 3H10L12 9L11 14H5L1 5z" fill={LB} stroke={BL} strokeWidth="1.600" /><path d="M15 17L19 13H27V20L20 25L13 23z" fill={LB} stroke={BL} strokeWidth="1.600" /></>,
  <><path d="M19 0L2 26L14 19z" fill="#3a9bcb" /><path d="M19 0L14 19L26 28z" fill="#1a73b8" /><path d="M19 0L23 17L14 19z" fill="#5cb6dc" /></>,
  <><path d="M1 20C1 11 6 7 9 7L13 12C9 13 7 16 7 20z" fill="#fff" stroke={DK} strokeWidth="1.600" /><path d="M9 8C17 3 27 9 27 20H20C20 15 16 12 12 13z" fill={LB} stroke={BL} strokeWidth="1.600" /><path d="M12 20C11 16 15 15 20 11L17 20z" fill={DK} /></>,
  <><R x={1} y={4} w={26} h={20} sw={1.800} /><T123 x={3.500} y={18} /><path d="M4 21H24" stroke={GR} strokeWidth="1.300" /></>,
  <><R x={1} y={1} w={26} h={26} sw={1.800} /><path d="M6 5V23" stroke={GR} strokeWidth="1.500" /><path d="M8 8H23M8 17H23" stroke={BL} strokeWidth="2.500" /><path d="M8 12H16M8 21H16" stroke={GR} strokeWidth="1.300" /></>,
  <><R x={1} y={3} w={26} h={21} sw={1.800} /><path d="M4 15L8.500 6.500L13 15z" fill="#8fce9e" stroke="#3f9b56" strokeWidth="1.500" /><path d="M15 7H24L19.500 15z" fill="#f4a3a8" stroke="#d13438" strokeWidth="1.500" /><path d="M4 20H24" stroke={GR} strokeWidth="1.500" /></>,
  <><R x={1} y={1} w={26} h={26} sw={1.800} /><path d="M1 4H27" stroke={LG} strokeWidth="4" /><path d="M1 6.500H27" stroke={DK} /><R x={6} y={11} w={4} h={4} f={LG} s={GR} /><R x={6} y={18} w={4} h={4} f={LG} s={GR} /><path d="M14 15H28V18L24 22V29H19V22L14 18z" fill="#fff" stroke={DK} strokeWidth="1.600" /></>,
  <><R x={1} y={1} w={26} h={26} sw={1.800} /><path d="M1 4H27" stroke={LG} strokeWidth="4" /><path d="M1 6.500H27M1 13H27M1 20H27M10 6V27M18.500 6V27" stroke={DK} strokeWidth="1.300" /></>,
  <><R x={1} y={1} w={26} h={26} sw={1.800} /><path d="M1 4H27" stroke={LG} strokeWidth="4" /><path d="M18.500 7H27V27H1V20H18.500z" fill={LB} /><path d="M1 6.500H27M1 13H18M10 6V20" stroke={DK} strokeWidth="1.300" /><path d="M18.500 7V27M1 20H27M18.500 13H27M10 20V27" stroke={BL} strokeWidth="1.500" /><R x={1} y={1} w={26} h={26} f="none" sw={1.800} /></>,
  <text x="5" y="23" className="text-[24px] font-bold" fill="#2b88c0" transform="translate(1 0) scale(0.900 1)">R</text>,
  <text x="-1" y="20" className="text-[24px] font-bold tracking-[-0.800px]" fill="#2b88c0">Py</text>,
  <><Ax /><path d="M1 6H19" stroke={BL} strokeWidth="1.700" /><circle cx="22" cy="6" r="3.500" fill={LB} stroke={BL} strokeWidth="1.500" /><path d="M1 13H14M1 19H8" stroke={GR} strokeWidth="1.500" /><circle cx="16" cy="13" r="2" stroke={GR} strokeWidth="1.500" /><circle cx="10" cy="19" r="2" stroke={GR} strokeWidth="1.500" /></>,
  <><path d="M10 13H17M23 4H14.500V23H18" stroke={DK} strokeWidth="1.500" /><R x={1} y={10} w={9} h={6} f={LB} s={BL} /><R x={17} y={1} w={10} h={6} f={LB} s={BL} /><R x={17} y={10} w={10} h={6} f={LB} s={BL} /><R x={17} y={19} w={10} h={6} f={LB} s={BL} /></>,
  <path d="M1 3H27V20H12L6 26V20H1z" fill="#fff" stroke={BL} strokeWidth="1.700" />,
  <><path d="M4 6V1H17L24 8V27H4V16" fill="#fff" stroke={DK} strokeWidth="1.700" /><path d="M17 1V8H24" stroke={DK} strokeWidth="1.500" /><circle cx="4.500" cy="11" r="3" fill={LB} stroke={BL} strokeWidth="1.500" /><path d="M11 13H20M8 18H17" stroke="#2b88c8" strokeWidth="1.500" /></>,
  <><path d="M6 3H1V7C1 11 4 12 8 12M22 3H27V7C27 11 24 12 20 12" stroke={DK} strokeWidth="1.600" /><path d="M7 2H21V12C21 20 7 20 7 12z" fill="#fff" stroke={DK} strokeWidth="1.600" /><path d="M7 1H21V5H7zM7 27V24C9 22 19 22 21 24V27z" fill={LB} stroke={BL} strokeWidth="1.500" /><path d="M14 18V22" stroke={DK} strokeWidth="3" /></>,
  <><path d="M3 0H17L24 7V28H3z" fill="#fff" stroke={DK} strokeWidth="1.700" /><path d="M17 0V7H24" stroke={DK} strokeWidth="1.500" /><rect x="6" y="17" width="3.500" height="8" fill={DK} /><rect x="12" y="20" width="3.500" height="5" fill={DK} /><rect x="18" y="13" width="3.500" height="12" fill={DK} /></>,
  <><path d="M12 5H27V24H1V19" fill="#fff" stroke={DK} strokeWidth="1.800" /><T123 x={5} y={19} /><path d="M4 21.500H24" stroke={GR} strokeWidth="1.300" /><SmallBolt /></>,
  <><R x={14} y={2} w={11} h={10} s={GR} /><R x={1} y={15} w={11} h={10} s={GR} /><R x={8} y={6} w={4} h={6} f={LB} s={BL} /><path d="M14 15H28V18L24 22V28H19V22L14 18z" fill="#fff" stroke={DK} strokeWidth="1.600" /><SmallBolt /></>,
  <><circle cx="5" cy="11" r="1.500" fill={DK} /><circle cx="14" cy="11" r="1.500" fill={DK} /><circle cx="23" cy="11" r="1.500" fill={DK} /></>,
];

const Expand = () => (
  <I w={20} h={19}><path d="M1 1L10 9.500L1 18M10 1L19 9.500L10 18" stroke="#252423" strokeWidth="1.500" /></I>
);

function VizPane() {
  return (
    <section className="flex w-[271px] shrink-0 flex-col border-l border-[#d8d6d4] bg-[#f3f2f1] text-[#252423]">
      <div className="flex h-[57px] items-center justify-between pr-[11px] pl-[12px]">
        <h2 className="pt-[2px] text-[22px] font-semibold tracking-[0.180px]">Visualizations</h2>
        <Expand />
      </div>
      <div className="h-[29px] pl-[12px] text-[17px] leading-[24px] font-semibold tracking-[-0.130px]">Build visual</div>
      <div className="flex h-[48px] pl-[12px]">
        <div className="flex size-[48px] items-center justify-center rounded-[4px] bg-[#d2d0ce]">
          <I w={36} h={36}>
            <path d="M0 1H29" stroke="#252423" strokeWidth="2" />
            <path d="M1 8.500H35V18.500H1zM1 25H35V35H1z" fill="#117865" stroke="#252423" strokeWidth="2" strokeDasharray="3 2" />
          </I>
        </div>
        <I w={40} h={40} c="mt-[4px] ml-[56px]">
          <path d="M8 36H2V2H16L27 13V16M16 2V13H27" stroke="#252423" strokeWidth="1.600" />
          <path d="M21 29C26 22 34 15 36 15C38 17 31 25 25 32M21 29C17 28 15 31 15 34C12 36 10 35 9 35C14 39 25 38 25 32z" stroke="#252423" strokeWidth="1.600" />
        </I>
      </div>
      <I w={270} h={20}><path d="M0 19H24L36 7.500L48 19H270" stroke="#8a8886" strokeWidth="1.300" /></I>
      <div className="grid h-[310px] shrink-0 grid-cols-[repeat(6,42px)] content-start gap-y-[12px] border-b border-[#e1dfdd] pt-[16px] pl-[16px]">
        {VIZ.map((v, i) => (
          <svg key={i} width="30" height="30" className="block overflow-visible" fill="none">{v}</svg>
        ))}
      </div>
      <div className="flex h-[256px] justify-between overflow-hidden text-[17.500px] tracking-[-0.120px] text-[#3b3a39]">
        <div className="w-[261px] pl-[6px]">
          <div className="h-[45px] pl-[12px] leading-[50px] tracking-[-0.400px]">Values</div>
          <div className="h-[42px] border border-dashed border-[#c8c6c4] bg-white pl-[15px] leading-[38px]">Add data fields here</div>
          <div className="h-[47px] pl-[12px] leading-[55px] font-semibold tracking-[-0.300px] text-[#484644]">Drill through</div>
          <div className="flex h-[36px] items-center justify-between pr-[24px] pl-[12px] tracking-[-0.200px]">
            Cross-report
            <div className="flex h-[24px] w-[48px] items-center gap-[3px] rounded-full border border-[#8a8886] bg-white pl-[6px] text-[14px] tracking-[-0.600px] text-[#605e5c]">
              <span className="size-[12px] rounded-full bg-[#605e5c]" />Off
            </div>
          </div>
          <div className="flex h-[44px] items-center justify-between pr-[24px] pl-[12px] tracking-[-0.220px]">
            Keep all filters
            <div className="flex h-[24px] w-[48px] items-center gap-[4px] rounded-full bg-[#117865] pl-[7px] text-[14px] tracking-[-0.600px] text-white">
              On<span className="size-[12px] rounded-full bg-white" />
            </div>
          </div>
          <div className="mt-[5px] h-[37px] overflow-hidden">
            <div className="h-[42px] border border-dashed border-[#c8c6c4] bg-white pl-[12px] leading-[37px] whitespace-nowrap">Add drill-through fields here</div>
          </div>
        </div>
        <div className="mt-[3px] h-[235px] w-[9px] rounded-full bg-[#d2d0ce]" />
      </div>
    </section>
  );
}

/* ---------- Data pane ---------- */
type Field = { n: string; k?: "calc" | "sum" | "date" };
const FIELDS: Field[] = [
  { n: "Adult_Child" },
  { n: "Age_Profile" },
  { n: "Archive_Date", k: "date" },
  { n: "Average Wait ...", k: "calc" },
  { n: "Avg/Med Wai...", k: "calc" },
  { n: "Case_Type" },
  { n: "Column1" },
  { n: "Latest Month ...", k: "calc" },
  { n: "Median Wait L...", k: "calc" },
  { n: "PY Latest Mon...", k: "calc" },
  { n: "Source.Name" },
  { n: "Speciality_Na..." },
  { n: "Specialty_HIPE", k: "sum" },
  { n: "Specialty_Name" },
  { n: "Time_Bands" },
  { n: "Total", k: "sum" },
];

function FieldIcon({ k }: { k?: Field["k"] }) {
  if (k === "calc")
    return (
      <I w={18} h={22}>
        <rect x="1" y="1" width="16" height="20" rx="3" stroke="#252423" strokeWidth="1.600" />
        <rect x="4.500" y="4" width="9" height="4" rx="1.500" stroke="#252423" strokeWidth="1.400" />
        {[12.500, 17].map((y) => [5, 9, 13].map((x) => <circle key={`${x}${y}`} cx={x} cy={y} r="1.300" fill="#252423" />))}
      </I>
    );
  if (k === "sum") return <I w={18} h={20}><path d="M16 1H1.500L9 9.500L1.500 18.500H16" stroke="#252423" strokeWidth="1.600" /></I>;
  if (k === "date")
    return (
      <I w={18} h={18}>
        <rect x="1" y="1" width="16" height="16" rx="3" stroke="#252423" strokeWidth="1.500" />
        <path d="M1 5.500H17" stroke="#252423" strokeWidth="1.500" />
        <path d="M5 9.500H14M5 13H11" stroke="#252423" strokeWidth="1.700" strokeDasharray="1.700 2" />
      </I>
    );
  return null;
}

function DataPane() {
  return (
    <section className="flex flex-1 flex-col border-l border-[#e1dfdd] bg-[#f3f2f1] text-[#252423]">
      <div className="flex h-[57px] items-center justify-between pr-[11px] pl-[12px]">
        <h2 className="pt-[2px] text-[22px] font-semibold tracking-[0.150px]">Data</h2>
        <Expand />
      </div>
      <div className="mt-[11px] ml-[6px] flex h-[36px] w-[258px] items-center rounded-[5px] border border-[#d2d0ce] border-b-[#605e5c] bg-white pl-[18px]">
        <I w={22} h={22}><circle cx="9" cy="9" r="8" stroke="#605e5c" strokeWidth="1.500" /><path d="M15 15L21 21" stroke="#605e5c" strokeWidth="1.500" /></I>
        <span className="mt-[3px] ml-[9px] text-[20px] tracking-[-0.200px] text-[#706e6c]">Search</span>
      </div>
      <div className="mt-[12px] flex h-[604px] overflow-hidden">
        <div className="w-[252px] pt-[2px] text-[17.500px] tracking-[-0.250px] text-[#323130]">
          <div className="flex h-[36px] items-center pl-[20px]">
            <Chevron w={17} h={9} c="#484644" />
            <I w={18} h={18} c="mr-[9px] ml-[7px]"><rect x="1" y="1" width="16" height="16" rx="3" stroke="#252423" strokeWidth="1.600" /><path d="M1 6H17M1 12H17M6 1V17M12 1V17" stroke="#252423" strokeWidth="1.400" /></I>
            <span className="pt-px">All_Data</span>
          </div>
          {FIELDS.map((f) => (
            <div key={f.n} className="flex h-[36px] items-center whitespace-nowrap">
              <div className="flex w-[66px] justify-end pr-[10px]">
                {f.k === "date" && <I w={10} h={18}><path d="M1 1L9 9L1 17" stroke="#484644" strokeWidth="1.400" /></I>}
              </div>
              <div className="size-[18px] rounded-[3px] border border-[#8a8886]" />
              <div className="w-[39px] pl-[12px]"><FieldIcon k={f.k} /></div>
              <span className="pt-px">{f.n}</span>
            </div>
          ))}
        </div>
        <div className="h-[505px] w-[12px] bg-[#c8c8c8]" />
      </div>
    </section>
  );
}

/* ---------- Status bar ---------- */
function StatusBar() {
  return (
    <footer className="flex h-[35px] shrink-0 items-center justify-between border-t-2 border-[#e1dfdd] bg-[#f3f2f1] pr-[27px] pl-[6px] text-[18px] tracking-[-0.300px] text-[#484644]">
      <span className="mt-[2px]">Page 2 of 2</span>
      <div className="flex items-center">
        <div className="h-[2px] w-[6px] bg-[#605e5c]" />
        <I w={152} h={18} c="ml-[8px]"><path d="M0 9H150" stroke="#605e5c" strokeWidth="1.400" /><rect x="40" y="0" width="6" height="17" fill="#605e5c" /><rect x="74" y="5" width="2" height="7" fill="#605e5c" /></I>
        <I w={12} h={12} c="ml-[6px]"><path d="M6 1V11M1 6H11" stroke="#484644" strokeWidth="2" /></I>
        <span className="ml-[20px] w-[35px] text-[17.500px] tracking-[-0.500px] whitespace-nowrap text-[#605e5c]">62%</span>
        <I w={24} h={18} c="ml-[28px]"><rect x="1" y="1" width="22" height="16" stroke="#605e5c" strokeWidth="1.700" /><path d="M4 7V4H8M16 4H20V7M4 11V14H8M16 14H20V11" stroke="#605e5c" strokeWidth="1.500" /></I>
      </div>
    </footer>
  );
}

/* ---------- Taskbar ---------- */
function pebbles() {
  let s = 77;
  const rnd = () => {
    s = (s * 16807) % 2147483647;
    return s / 2147483647;
  };
  const tones = ["#8a806c", "#6f695e", "#a39779", "#59554f", "#7c7362"];
  return Array.from({ length: 190 }, (_, i) => {
    const x = rnd() * 1920;
    const y = rnd() * 73;
    const dark = x > 930 && x < 1420 && y < 40;
    const big = rnd() > 0.750;
    const w = big ? 4 + rnd() * 4.500 : 1.500 + rnd() * 2.500;
    const h = big ? 2.500 + rnd() * 2.500 : 1 + rnd();
    const j = () => 0.700 + rnd() * 0.500;
    const pts = [[-w * j(), 0], [-w * 0.500, -h * j()], [w * 0.400, -h * j()], [w * j(), h * 0.100], [w * 0.300, h * j()], [-w * 0.600, h * j()]];
    return { i, x, y, d: `M${pts.map((p) => p.join(" ")).join("L")}z`, a: rnd() * 100 - 50, f: tones[Math.floor(rnd() * 5)], o: dark ? 0.100 : big ? 0.800 : 0.400 };
  });
}
const PEBBLES = pebbles();

const Chrome = ({ badge }: { badge: React.ReactNode }) => (
  <svg width="44" height="44" viewBox="0 0 44 44" className="ml-[3px] overflow-visible" fill="none">
    <circle cx="22" cy="23" r="18" fill="#f2c11d" />
    <path d="M22 23L6.400 14A18 18 0 0 1 37.600 14z" fill="#d93a2f" />
    <path d="M22 23L6.400 14A18 18 0 0 0 22 41L31 27z" fill="#259447" />
    <path d="M22 14H37.600A18 18 0 0 1 22 41L30 27z" fill="#f2c11d" />
    <circle cx="22" cy="23" r="9" fill="#eee" />
    <circle cx="22" cy="23" r="7" fill="#2f6fd6" />
    {badge}
  </svg>
);

const APPS: { n: string; el: React.ReactNode; dot?: boolean; on?: boolean }[] = [
  { n: "start", el: <I w={34} h={34}><defs><linearGradient id="wn" x1="0" y1="0" x2="1" y2="1"><stop stopColor="#7bd6f5" /><stop offset="1" stopColor="#1490df" /></linearGradient></defs><path d="M0 0H16V16H0zM18 0H34V16H18zM0 18H16V34H0zM18 18H34V34H18z" fill="url(#wn)" /></I> },
  { n: "chrome", dot: true, el: <Chrome badge={<><circle cx="35" cy="9" r="10.500" fill="#77716e" /><path d="M29 16L31 3L35 7L40 2L41 15L35 20z" fill="#b5afab" /><circle cx="35" cy="13" r="3" fill="#7a6254" /></>} /> },
  { n: "files", dot: true, el: <I w={36} h={36}><path d="M0 4C0 2 1 1 3 1H12L16 5H33C35 5 36 6 36 8V32C36 34 35 35 33 35H3C1 35 0 34 0 32z" fill="#dba514" /><path d="M0 10H36V32C36 34 35 35 33 35H3C1 35 0 34 0 32z" fill="#f3cd55" /><path d="M6 35V26C6 24 7 23 9 23H27C29 23 30 24 30 26V35z" fill="#1579cf" /><path d="M12 28.500H24" stroke="#0b4f8f" strokeWidth="3" /></I> },
  { n: "chrome2", dot: true, el: <Chrome badge={<><circle cx="35" cy="8" r="11" fill="#0b4a78" /><rect x="26" y="0" width="18" height="18" rx="5" fill="#0d1030" /><path d="M31 6L35 9L41 5M32 13H40" stroke="#1b4e80" strokeWidth="1.500" /></>} /> },
  { n: "code", dot: true, el: <I w={36} h={36}><path d="M26 0L36 4.500V31.500L26 36L8 19L3 23L0 21.500V14.500L3 13L8 17z" fill="#1780c8" /><path d="M26 0L36 4.500V31.500L26 36z" fill="#33a3e8" /><path d="M26 10L15 18L26 26z" fill="#23272d" /><path d="M0 14.500L3 13L26 33V36L0 17z" fill="#0f6cb0" /></I> },
  { n: "powerbi", dot: true, on: true, el: <I w={30} h={36}><rect x="15" width="13" height="36" rx="1.500" fill="#d6a000" /><rect x="8" y="9" width="13" height="27" rx="1.500" fill="#e9bd23" /><rect x="1" y="18" width="13" height="18" rx="1.500" fill="#f6d75e" /></I> },
  { n: "vlc", dot: true, el: <I w={32} h={36}><path d="M3 27H29L31 35H1z" fill="#e8730c" /><path d="M14 1H18L26 30C22 34 10 34 6 30z" fill="#f3820f" /><path d="M11.500 10H20.500L22.500 17H9.500zM7.500 23H24.500L26 29C22 32 10 32 6 29z" fill="#e6e3df" /></I> },
  { n: "notes", dot: true, el: <I w={30} h={36}><rect x="1" y="3" width="28" height="32" rx="2" fill="#4fb6d2" /><path d="M1 31H29V33C29 34 28 36 27 36H3C2 36 1 35 1 33z" fill="#b5531b" /><path d="M1 29H29V31H1z" fill="#eee" /><path d="M5 0V6M10 0V6M15 0V6M20 0V6M25 0V6" stroke="#8fd8ea" strokeWidth="1.500" /><path d="M7 12H23M7 18H23M7 24H23" stroke="#165a78" strokeWidth="2.500" /></I> },
  { n: "ppt", dot: true, el: <I w={34} h={34}><rect x="17" y="4" width="15" height="26" fill="#eee" stroke="#c43e1c" strokeWidth="2" /><path d="M20 10H29M20 22H29M20 26H29" stroke="#c43e1c" strokeWidth="2" /><circle cx="24" cy="15" r="4" fill="#c43e1c" /><path d="M1 4L20 0V34L1 30z" fill="#d14424" /><path d="M7.500 25V10H11.500C17 10 17 18.500 11.500 18.500H7.500" stroke="#fff" strokeWidth="2.600" /></I> },
];

function Taskbar() {
  const st = "#e6e6e6";
  return (
    <div className="relative flex h-[73px] shrink-0 overflow-hidden border-t border-black bg-[#29282a]">
      <svg width="1920" height="73" className="absolute inset-0" fill="none">
        <defs>
          <filter id="grain" x="0" y="0" width="100%" height="100%" colorInterpolationFilters="sRGB">
            <feTurbulence type="fractalNoise" baseFrequency="0.080 0.180" numOctaves="4" seed="9" />
            <feColorMatrix values="0.480 0 0 0 -0.060  0.480 0 0 0 -0.065  0.480 0 0 0 -0.052  0 0 0 0 1" />
          </filter>
          <radialGradient id="shade"><stop stopColor="#000" stopOpacity="0.950" /><stop offset="0.500" stopColor="#000" stopOpacity="0.700" /><stop offset="1" stopColor="#000" stopOpacity="0" /></radialGradient>
        </defs>
        <rect width="1920" height="73" filter="url(#grain)" />
        {PEBBLES.map((p) => (
          <path key={p.i} d={p.d} fill={p.f} opacity={p.o} transform={`translate(${p.x} ${p.y}) rotate(${p.a})`} />
        ))}
        <ellipse cx="1180" cy="0" rx="290" ry="42" fill="url(#shade)" />
      </svg>
      <div className="relative flex w-[594px] pl-[662px]">
        {APPS.map((a) => (
          <div key={a.n} className="flex h-[73px] w-[66.250px] shrink-0 flex-col items-center">
            <div className={`mt-[6px] flex h-[60px] w-[58px] items-center justify-center rounded-[6px] ${a.on ? "bg-white/10" : ""}`}>{a.el}</div>
            {a.dot && <div className={`-mt-[5px] rounded-full ${a.on ? "h-[5px] w-[25px] bg-[#3fd13a]" : "h-[5px] w-[9px] bg-[#a5a4a3]"}`} />}
          </div>
        ))}
      </div>
      <div className="relative ml-auto flex text-[#f2f2f2]">
        <I w={24} h={18} c="mt-[9px]"><rect x="1" y="1" width="22" height="15" rx="2" stroke={st} strokeWidth="1.500" /><path d="M4 5H20M4 8.500H20" stroke={st} strokeWidth="2" strokeDasharray="2 1.500" /><path d="M7 12.500H17" stroke={st} strokeWidth="1.500" /></I>
        <I w={16} h={10} c="mt-[32px] ml-[124px]"><path d="M1 9L8 1.500L15 9" stroke={st} strokeWidth="1.700" /></I>
        <I w={24} h={24} c="mt-[25px] ml-[28px]"><path d="M22 12A10.500 10.500 0 1 0 12 22.500M12 1.500C5 8 5 16 10 22M12 1.500C15 4 17 8 17 11M2 8.500H21M2 15.500H11" stroke={st} strokeWidth="1.400" /><circle cx="17" cy="17" r="5.500" stroke={st} strokeWidth="1.500" /><path d="M13 21L21 13" stroke={st} strokeWidth="1.400" /></I>
        <I w={24} h={20} c="mt-[27px] ml-[12px]"><path d="M1 7H5L10 2V18L5 13H1zM14 6C16 8 16 12 14 14M17 3.500C21 7 21 13 17 16.500M20 1C25 6 25 14 20 19" stroke={st} strokeWidth="1.400" /></I>
        <I w={26} h={22} c="mt-[25px] ml-[11px]"><rect x="2" y="7" width="20" height="12" rx="2.500" stroke={st} strokeWidth="1.500" /><path d="M6 10H19V16H6z" fill={st} /><path d="M24 11V15" stroke={st} strokeWidth="2" /><path d="M1 4H9V8C9 11 1 11 1 8zM3 1V4M7 1V4" fill="#2a2a2a" stroke={st} strokeWidth="1.500" /></I>
        <div className="mt-[11px] w-[118px] text-right text-[17.500px] leading-[24px] tracking-[-0.050px]">
          <div className="tracking-[-0.350px]">2:30 am</div>
          <div>20/02/2025</div>
        </div>
        <I w={20} h={26} c="mt-[23px] mr-[30px] ml-[14px]"><path d="M3 7C3 3 6 1 10 1H11V8H17V15L19 19H1L3 15z" fill={st} /><path d="M6.500 21C7 25 13 25 13.500 21" fill={st} /><path d="M12 1H18L12 7H18" stroke={st} strokeWidth="1.400" /><path d="M7 9H11L7 14H11" stroke="#222" strokeWidth="1.400" /></I>
      </div>
    </div>
  );
}

export default function App() {
  return (
    <div className="flex h-[1080px] w-[1920px] flex-col overflow-hidden bg-[#f3f2f1] font-['Open_Sans','Noto_Sans',sans-serif]">
      <TitleBar />
      <Tabs />
      <Ribbon />
      <div className="flex h-[732px] shrink-0">
        <Rail />
        <div className="w-[1317px] shrink-0">
          <Canvas />
          <PageTabs />
        </div>
        <VizPane />
        <DataPane />
      </div>
      <StatusBar />
      <Taskbar />
    </div>
  );
}
